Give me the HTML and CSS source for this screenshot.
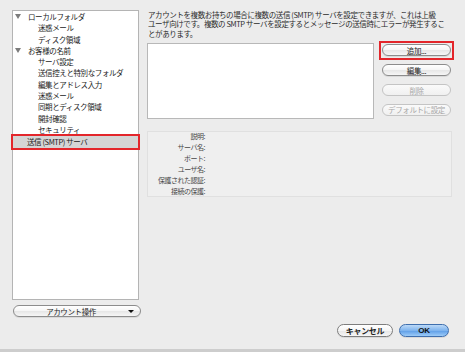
FILE: index.html
```html
<!DOCTYPE html>
<html lang="ja">

<head>
  <meta charset="UTF-8">
  <meta name="viewport" content="width=device-width, initial-scale=1.0">
  <title>アカウント設定</title>
  <link rel="stylesheet" href="styles.css">
</head>

<body>
  <div class="window">
    <div class="content">
      <div class="sidebar">
        <ul class="tree">
          <li class="node"><span class="arrow"></span>ローカルフォルダ</li>
          <li class="leaf">迷惑メール</li>
          <li class="leaf">ディスク領域</li>
          <li class="node"><span class="arrow"></span>お客様の名前</li>
          <li class="leaf">サーバ設定</li>
          <li class="leaf">送信控えと特別なフォルダ</li>
          <li class="leaf">編集とアドレス入力</li>
          <li class="leaf">迷惑メール</li>
          <li class="leaf">同期とディスク領域</li>
          <li class="leaf">開封確認</li>
          <li class="leaf">セキュリティ</li>
          <li class="item selected">送信 (SMTP) サーバ</li>
        </ul>
        <button class="btn menu-btn"><span class="menu-label">アカウント操作</span><span class="caret"></span></button>
      </div>

      <div class="panel">
        <p class="intro">アカウントを複数お持ちの場合に複数の送信 (SMTP) サーバを設定できますが、これは上級<br>ユーザ向けです。複数の SMTP サーバを設定するとメッセージの送信時にエラーが発生するこ<br>とがあります。</p>

        <div class="server-row">
          <div class="server-list"></div>
          <div class="server-actions">
            <div class="marked">
              <button class="btn">追加...</button>
            </div>
            <button class="btn">編集...</button>
            <button class="btn" disabled>削除</button>
            <button class="btn" disabled>デフォルトに設定</button>
          </div>
        </div>

        <dl class="details">
          <dt>説明:</dt><dd></dd>
          <dt>サーバ名:</dt><dd></dd>
          <dt>ポート:</dt><dd></dd>
          <dt>ユーザ名:</dt><dd></dd>
          <dt>保護された認証:</dt><dd></dd>
          <dt>接続の保護:</dt><dd></dd>
        </dl>
      </div>
    </div>

    <div class="footer">
      <button class="btn dialog-btn cancel">キャンセル</button>
      <button class="btn dialog-btn primary">OK</button>
    </div>
  </div>
</body>

</html>
```

FILE: styles.css
```css
body {
  margin: 0;
  font-family: "Noto Sans CJK JP", "Noto Sans", sans-serif;
  color: #1a1a1a;
}

.window {
  width: 465px;
  height: 352px;
  box-sizing: border-box;
  display: flex;
  flex-direction: column;
  background: #ececec;
  border-bottom: 3px solid #cdcdcd;
}

.content {
  display: flex;
  gap: 8px;
  padding: 10px 13px 0 12px;
}

/* left column */
.sidebar {
  width: 127px;
  display: flex;
  flex-direction: column;
}

.tree {
  list-style: none;
  margin: 0;
  padding: 0;
  height: 290px;
  box-sizing: border-box;
  background: #fff;
  border: 1px solid #b4b4b4;
  font-size: 7.5px;
  letter-spacing: -0.4px;
}

.tree li {
  height: 11.3px;
  line-height: 11.3px;
  white-space: nowrap;
}

.tree .node {
  padding-left: 2px;
  display: flex;
  align-items: center;
}

.tree .leaf {
  padding-left: 25px;
}

.tree .item {
  padding-left: 14px;
}

.tree .selected {
  height: 12px;
  line-height: 12px;
  margin-top: 0.5px;
  background: #d5d5d5;
  outline: 2px solid #e3262b;
}

.arrow {
  width: 0;
  height: 0;
  border-left: 3px solid transparent;
  border-right: 3px solid transparent;
  border-top: 5px solid #7c7c7c;
  margin-right: 7px;
}

/* buttons */
.btn {
  display: flex;
  align-items: center;
  justify-content: center;
  height: 12px;
  padding: 0;
  box-sizing: border-box;
  border: 1px solid #8c8c8c;
  border-radius: 7px;
  background: linear-gradient(#ffffff, #f5f5f5 50%, #e6e6e6 51%, #f6f6f6);
  box-shadow: 0 1px 0 rgba(0, 0, 0, 0.08);
  font-family: "Noto Sans CJK JP", "Noto Sans", sans-serif;
  font-size: 7.5px;
  letter-spacing: -0.4px;
  color: #1c1c1c;
}

.btn:disabled {
  border-color: #c4c4c4;
  color: #a8a8a8;
  background: linear-gradient(#fafafa, #f0f0f0);
  box-shadow: none;
}

/* red highlight box drawn around the add button */
.marked {
  margin: -4px -3px -3.5px;
  padding: 2px 1px 1.5px;
  border: 2px solid #e3262b;
}

.marked .btn {
  width: 100%;
}

.menu-btn {
  margin-top: 5px;
  width: 128px;
  margin-left: 1px;
}

.menu-label {
  flex: 1;
  text-align: center;
}

.caret {
  width: 0;
  height: 0;
  border-left: 3px solid transparent;
  border-right: 3px solid transparent;
  border-top: 3px solid #111;
  margin-right: 6px;
}

/* right column */
.panel {
  width: 305px;
  display: flex;
  flex-direction: column;
}

.intro {
  margin: 0 0 0 1px;
  font-size: 7.5px;
  letter-spacing: -0.4px;
  line-height: 9.3px;
  color: #2a2a2a;
  white-space: nowrap;
}

.server-row {
  display: flex;
  gap: 8px;
  margin-top: 5px;
}

.server-list {
  width: 227px;
  height: 76px;
  box-sizing: border-box;
  background: #fff;
  border: 1px solid #b8b8b8;
}

.server-actions {
  width: 69px;
  display: flex;
  flex-direction: column;
  padding-top: 2px;
  gap: 8px;
}

.server-actions .btn:last-child {
  margin-top: -0.5px;
}

.details {
  margin: 12px 0 0;
  height: 66px;
  box-sizing: border-box;
  display: grid;
  grid-template-columns: 57px 1fr;
  grid-auto-rows: 11px;
  background: #efefef;
  border: 1px solid #e0e0e0;
  font-size: 7px;
  letter-spacing: -0.5px;
  line-height: 11px;
  color: #474747;
}

.details dt {
  text-align: right;
  white-space: nowrap;
  margin-top: -1px;
}

.details dd {
  margin: 0;
}

/* bottom buttons */
.footer {
  display: flex;
  justify-content: flex-end;
  gap: 6px;
  margin-top: 7px;
  padding-right: 16px;
}

.dialog-btn {
  height: 13px;
  font-size: 8px;
  letter-spacing: -0.3px;
  font-weight: bold;
}

.cancel {
  width: 56px;
  border-color: #7d7d7d;
}

.primary {
  width: 50px;
  border-color: #3f6fae;
  background: linear-gradient(#bcd9f7, #7fb4ee 50%, #5c9ce6 51%, #9ccbf8);
  font-family: "Liberation Sans", Arial, sans-serif;
  font-size: 8px;
  color: #111;
}
```
